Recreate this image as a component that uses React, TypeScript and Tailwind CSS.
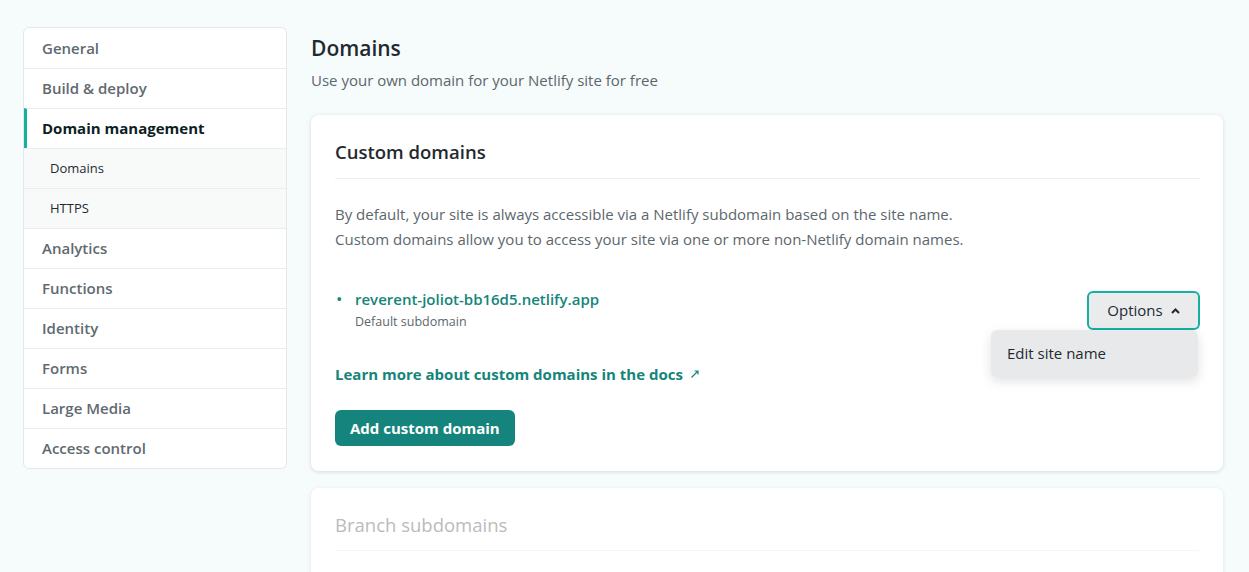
import React from "react";

const navItems = [
  { label: "General" },
  { label: "Build & deploy" },
  { label: "Domain management", active: true },
  { label: "Domains", sub: true },
  { label: "HTTPS", sub: true },
  { label: "Analytics" },
  { label: "Functions" },
  { label: "Identity" },
  { label: "Forms" },
  { label: "Large Media" },
  { label: "Access control" },
];

export default function App() {
  return (
    <div
      className="min-h-[572px] w-full bg-[#f6fbfb] text-[#2e3a40] overflow-hidden"
      style={{ fontFamily: '"Open Sans", "Noto Sans", sans-serif' }}
    >
      <div className="flex items-start pl-[23px] pr-[26px] pt-[27px] gap-[24px]">
        <nav className="w-[264px] shrink-0 rounded-md border border-[#e3e8ea] bg-white overflow-hidden">
          {navItems.map((item, i) => (
            <div
              key={item.label}
              className={
                "h-[40px] flex items-center " +
                (i > 0 ? "border-t border-[#e9edef] " : "") +
                (item.sub
                  ? "bg-[#f8fafa] pl-[26px] text-[13px] text-[#1f2a30]"
                  : item.active
                  ? "pl-[15px] border-l-[3px] border-l-[#15b0a0] text-[15px] font-bold text-[#0e1e25]"
                  : "pl-[18px] text-[15px] font-semibold text-[#5f6a70]")
              }
            >
              {item.label}
            </div>
          ))}
        </nav>

        <main className="flex-1 min-w-0">
          <h1 className="text-[21px] font-semibold leading-[28px] text-[#1f2a30] mt-[7px]">
            Domains
          </h1>
          <p className="text-[15px] text-[#5c676d] mt-[8px] leading-[20px]">
            Use your own domain for your Netlify site for free
          </p>

          <section className="mt-[25px] rounded-lg bg-white shadow-[0_1px_4px_rgba(30,50,60,0.15)] pl-[24px] pr-[23px] pt-[24px] pb-[25px]">
            <h2 className="text-[18.5px] font-semibold leading-[26px] text-[#1f2a30]">
              Custom domains
            </h2>
            <div className="mt-[13px] h-px bg-[#eef1f2]" />
            <p className="mt-[23px] text-[15px] leading-[25px] text-[#5c676d]">
              By default, your site is always accessible via a Netlify subdomain based on the site name.
              <br />
              Custom domains allow you to access your site via one or more non-Netlify domain names.
            </p>

            <div className="mt-[34px] flex items-start justify-between">
              <div className="flex items-start">
                <span className="w-[20px] pl-[1px] text-[#14857a] text-[17px] leading-[26px]">•</span>
                <div>
                  <div className="text-[15px] font-semibold leading-[26px] text-[#14857a]">
                    reverent-joliot-bb16d5.netlify.app
                  </div>
                  <div className="text-[12.5px] leading-[20px] text-[#5c676d]">
                    Default subdomain
                  </div>
                </div>
              </div>
              <div className="relative mt-[5px]">
                <button className="h-[39px] w-[113px] rounded-md border-2 border-[#15b0a0] bg-[#e9ebed] flex items-center justify-center gap-[8px] text-[15px] text-[#1f2a30]">
                  Options
                  <svg width="9" height="6" viewBox="0 0 9 6">
                    <path d="M1 5 L4.5 1.5 L8 5" stroke="#1f2a30" strokeWidth="2" fill="none" />
                  </svg>
                </button>
                <div className="absolute right-[2px] top-[39px] w-[207px] h-[47px] rounded-md bg-[#e8e9eb] shadow-[0_4px_12px_rgba(0,0,0,0.12)] flex items-center pl-[16px] text-[15px] text-[#1f2a30]">
                  Edit site name
                </div>
              </div>
            </div>

            <a className="mt-[31px] inline-flex items-center gap-[7px] text-[15px] font-bold text-[#14857a] leading-[22px]">
              Learn more about custom domains in the docs
              <svg width="10" height="10" viewBox="0 0 10 10">
                <path d="M1.5 8.5 L8 2 M4.5 2 H8 V5.5" stroke="#14857a" strokeWidth="1.2" fill="none" />
              </svg>
            </a>

            <div className="mt-[24px]">
              <button className="h-[36px] px-[15px] rounded-md bg-[#15847d] text-white text-[15px] font-bold">
                Add custom domain
              </button>
            </div>
          </section>

          <section className="mt-[17px] rounded-lg bg-white shadow-[0_1px_4px_rgba(30,50,60,0.10)] px-[24px] pt-[24px] pb-[40px]">
            <h2 className="text-[18.5px] leading-[26px] text-[#b8bcbe]">Branch subdomains</h2>
            <div className="mt-[12px] h-px bg-[#f3f5f6]" />
          </section>
        </main>
      </div>
    </div>
  );
}
